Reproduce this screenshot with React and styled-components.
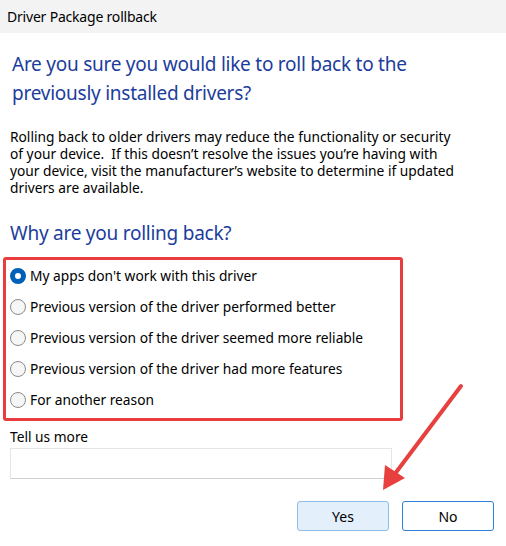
import React from "react";
import styled, { createGlobalStyle } from "styled-components";

const Global = createGlobalStyle`
  html, body { margin: 0; padding: 0; background: #fff; }
  body { font-family: "Noto Sans", "Open Sans", sans-serif; color: #000; }
`;

const Window = styled.div`
  position: relative;
  width: 506px;
  height: 546px;
  background: #fff;
  overflow: hidden;
`;

const TitleBar = styled.div`
  height: 33px;
  background: #f3f3f3;
  display: flex;
  align-items: center;
  padding-left: 7px;
  font-size: 14px;
  letter-spacing: -0.2px;
`;

const Content = styled.div`
  display: flex;
  flex-direction: column;
  padding: 0 10px;
`;

const Heading = styled.h1`
  margin: ${(p) => p.$mt}px 0 0 ${(p) => p.$indent || 0}px;
  font-size: 19px;
  font-weight: 400;
  line-height: 29px;
  color: #1c3d9c;
  letter-spacing: -0.25px;
`;

const Body = styled.p`
  margin: 20px 0 0;
  font-size: 13.75px;
  line-height: 17px;
  white-space: nowrap;
`;

const RadioBox = styled.div`
  margin: 9px 0 0 -7px;
  width: 390px;
  border: 3px solid #e93d3d;
  border-radius: 3px;
  padding: 0 0 3px 4px;
  display: flex;
  flex-direction: column;
`;

const RadioRow = styled.label`
  display: flex;
  align-items: center;
  gap: 4px;
  height: 31px;
  font-size: 13.75px;
`;

const RadioDot = styled.span`
  width: 16px;
  height: 16px;
  box-sizing: border-box;
  border-radius: 50%;
  flex: none;
  ${(p) =>
    p.$checked
      ? `background: #fff; border: 5px solid #005fb8;`
      : `background: #f6f6f6; border: 1px solid #8a8a8a;`}
`;

const Label = styled.div`
  margin-top: 7px;
  font-size: 13.75px;
  line-height: 17px;
`;

const TextBox = styled.div`
  margin-top: 3px;
  width: 382px;
  height: 31px;
  box-sizing: border-box;
  border: 1px solid #e5e5e5;
  border-bottom-color: #d0d0d0;
`;

const Buttons = styled.div`
  display: flex;
  justify-content: flex-end;
  gap: 13px;
  margin-top: 22px;
  padding-right: 2px;
`;

const Button = styled.button`
  width: 92px;
  height: 30px;
  box-sizing: border-box;
  border-radius: 3px;
  font-family: inherit;
  font-size: 14px;
  color: #000;
  background: ${(p) => (p.$primary ? "#e3effa" : "#fff")};
  border: 1px solid ${(p) => (p.$primary ? "#8fbde8" : "#2b82d6")};
  padding: 0;
`;

const Arrow = styled.svg`
  position: absolute;
  left: 0;
  top: 0;
  pointer-events: none;
`;

const options = [
  "My apps don't work with this driver",
  "Previous version of the driver performed better",
  "Previous version of the driver seemed more reliable",
  "Previous version of the driver had more features",
  "For another reason",
];

export default function App() {
  return (
    <Window>
      <Global />
      <TitleBar>Driver Package rollback</TitleBar>
      <Content>
        <Heading $mt={17} $indent={2}>
          Are you sure you would like to roll back to the
          <br />
          previously installed drivers?
        </Heading>
        <Body>
          Rolling back to older drivers may reduce the functionality or security
          <br />
          of your device.&nbsp; If this doesn’t resolve the issues you’re having with
          <br />
          your device, visit the manufacturer’s website to determine if updated
          <br />
          drivers are available.
        </Body>
        <Heading $mt={23}>Why are you rolling back?</Heading>
        <RadioBox>
          {options.map((o, i) => (
            <RadioRow key={o}>
              <RadioDot $checked={i === 0} />
              {o}
            </RadioRow>
          ))}
        </RadioBox>
        <Label>Tell us more</Label>
        <TextBox />
        <Buttons>
          <Button $primary>Yes</Button>
          <Button>No</Button>
        </Buttons>
      </Content>
      <Arrow width="506" height="546" viewBox="0 0 506 546">
        <line x1="461" y1="386" x2="388" y2="483" stroke="#e8403f" strokeWidth="4" strokeLinecap="round" />
        <polygon points="383,490 385,465 405,478" fill="#e8403f" />
      </Arrow>
    </Window>
  );
}
